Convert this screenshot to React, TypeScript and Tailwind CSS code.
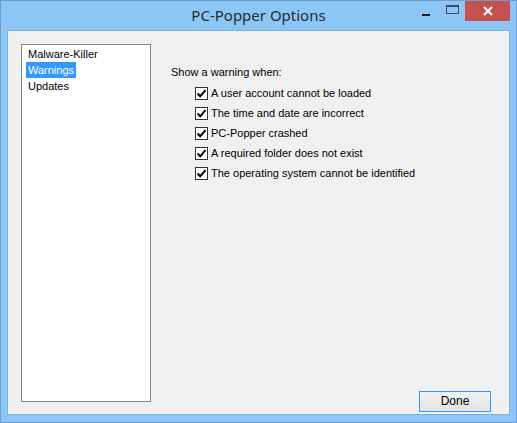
import { useState } from 'react';

const warnings = [
  'A user account cannot be loaded',
  'The time and date are incorrect',
  'PC-Popper crashed',
  'A required folder does not exist',
  'The operating system cannot be identified',
];

const pages = ['Malware-Killer', 'Warnings', 'Updates'];

function Check({ checked, onToggle, label }: { checked: boolean; onToggle: () => void; label: string }) {
  return (
    <label className="flex items-center h-[20px] cursor-default" onClick={onToggle}>
      <span className="w-[13px] h-[13px] border border-[#333] bg-white flex items-center justify-center">
        {checked && (
          <svg width="11" height="11" viewBox="0 0 11 11">
            <path d="M1.5 5.5 L4.2 8.3 L9.5 2.2" fill="none" stroke="#000" strokeWidth="2" />
          </svg>
        )}
      </span>
      <span className="ml-[3px]">{label}</span>
    </label>
  );
}

export default function App() {
  const [selected, setSelected] = useState(1);
  const [checks, setChecks] = useState(warnings.map(() => true));

  return (
    <div
      className="w-[517px] h-[423px] bg-[#8cc6f7] border border-[#6a9fd4] flex flex-col text-[11px] text-black"
      style={{ fontFamily: '"Liberation Sans", Arial, sans-serif' }}
    >
      {/* 타이틀바 */}
      <div className="h-[29px] grid grid-cols-[1fr_auto_1fr]">
        <div />
        <div className="text-[15px] text-[#2b2b2b] pt-[3px]" style={{ fontFamily: '"Noto Sans", sans-serif' }}>
          PC-Popper Options
        </div>
        <div className="flex justify-end items-start">
          <div className="w-[26px] h-[20px] flex items-center justify-center">
            <div className="w-[8px] h-[2px] bg-[#1c1c1c] mt-[7px]" />
          </div>
          <div className="w-[26px] h-[20px] flex items-center justify-center">
            <div className="w-[13px] h-[9px] border border-[#3a4d63] border-t-2 -mt-[4px]" />
          </div>
          <div className="w-[45px] h-[20px] bg-[#c75050] flex items-center justify-center">
            <svg width="10" height="10" viewBox="0 0 10 10">
              <path d="M1 1 L9 9 M9 1 L1 9" stroke="#fff" strokeWidth="2" />
            </svg>
          </div>
          <div className="w-[6px]" />
        </div>
      </div>

      {/* 본문 */}
      <div className="mx-[6px] mb-[7px] flex-1 bg-[#f0f0f0] border border-[#7fb1e3] flex pl-[13px] pt-[13px]">
        <div className="w-[130px] h-[358px] bg-white border border-[#828790] px-[4px] py-[1px]">
          {pages.map((p, i) => (
            <div
              key={p}
              onClick={() => setSelected(i)}
              className={`h-[16px] leading-[16px] px-[2px] w-fit ${
                i === selected ? 'bg-[#3399ff] text-white' : 'text-black'
              }`}
            >
              {p}
            </div>
          ))}
        </div>

        <div className="flex-1 flex flex-col pr-[18px] pb-[2px]">
          <div className="pl-[20px] pt-[20px]">
            <div className="h-[17px] leading-[17px]">Show a warning when:</div>
            <div className="pl-[24px] pt-[2px] flex flex-col">
              {warnings.map((w, i) => (
                <Check
                  key={w}
                  label={w}
                  checked={checks[i]}
                  onToggle={() => setChecks(checks.map((c, j) => (j === i ? !c : c)))}
                />
              ))}
            </div>
          </div>
          <div className="mt-auto flex justify-end">
            <button className="w-[72px] h-[21px] border border-[#3399ff] bg-gradient-to-b from-[#f2f2f2] to-[#e3e3e3] text-[12px] leading-[19px]">
              Done
            </button>
          </div>
        </div>
      </div>
    </div>
  );
}
